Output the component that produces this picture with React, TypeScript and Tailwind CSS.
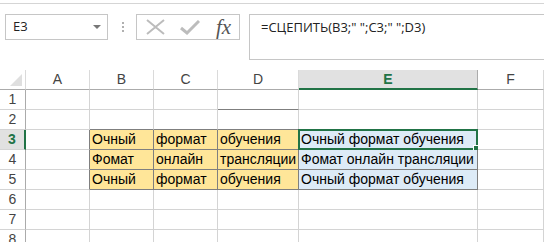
import React from "react";

const COLS = [
  { key: "", w: "w-[26px]" },
  { key: "A", w: "w-[64px]" },
  { key: "B", w: "w-[64px]" },
  { key: "C", w: "w-[64px]" },
  { key: "D", w: "w-[81px]" },
  { key: "E", w: "w-[179px]" },
  { key: "F", w: "w-[66px]" },
];

const DATA: Record<number, string[]> = {
  3: ["Очный", "формат", "обучения", "Очный формат обучения"],
  4: ["Фомат", "онлайн", "трансляции", "Фомат онлайн трансляции"],
  5: ["Очный", "формат", "обучения", "Очный формат обучения"],
};

function Cell({ r, c }: { r: number; c: number }) {
  const w = COLS[c].w;
  if (c === 0) {
    const sel = r === 3;
    return (
      <div
        className={`${w} h-[20px] shrink-0 flex items-center justify-center border-b border-r text-[14px] ${
          sel
            ? "bg-[#e1e1e1] border-r-2 border-r-[#217346] border-b-[#d4d4d4] text-[#217346] font-bold"
            : "border-b-[#d4d4d4] border-r-[#ababab] text-[#444]"
        }`}
      >
        {r}
      </div>
    );
  }
  const inData = r >= 3 && r <= 5;
  const yellow = inData && c >= 2 && c <= 4;
  const blue = inData && c === 5;
  const darkBottom = (r >= 2 && r <= 5 && c >= 2 && c <= 5) || (r === 1 && c === 4);
  const darkRight = inData && c >= 1 && c <= 5;
  const bg = yellow ? "bg-[#ffe699]" : blue ? "bg-[#ddebf7]" : "bg-white";
  const text = inData && c >= 2 ? DATA[r][c - 2] : "";
  return (
    <div
      className={`${w} h-[20px] shrink-0 relative border-b border-r ${bg} ${
        darkBottom ? "border-b-[#7f7f7f]" : "border-b-[#d4d4d4]"
      } ${darkRight ? "border-r-[#7f7f7f]" : "border-r-[#d4d4d4]"} flex items-center pl-[2px] text-[14px] text-black whitespace-nowrap overflow-visible`}
    >
      {text}
      {r === 3 && c === 5 && (
        <>
          <div className="absolute left-[-1px] top-[-1px] right-[-1px] bottom-[-1px] border-2 border-[#217346]" />
          <div className="absolute right-[-3px] bottom-[-3px] w-[5px] h-[5px] bg-[#217346] border border-white box-content" />
        </>
      )}
    </div>
  );
}

export default function App() {
  return (
    <div
      className="w-[544px] h-[242px] bg-white overflow-hidden relative"
      style={{ fontFamily: '"Liberation Sans", Arial, sans-serif' }}
    >
      {/* ribbon edge */}
      <div className="h-[3px] border-b border-[#d5d5d5] box-content" />
      {/* formula bar */}
      <div className="flex items-start pt-[10px] h-[56px]">
        <div
          className="ml-[5px] w-[103px] h-[26px] border border-[#c6c6c6] flex items-center pl-[7px] pr-[6px] text-[13px] text-[#222] justify-between"
          style={{ fontFamily: '"Open Sans", "Noto Sans", sans-serif' }}
        >
          <span>E3</span>
          <svg width="8" height="5" viewBox="0 0 8 5">
            <path d="M0 0 L8 0 L4 4 Z" fill="#777" />
          </svg>
        </div>
        <div className="ml-[13px] w-[4px] h-[26px] flex flex-col items-center justify-center gap-[2px]">
          <div className="w-[2px] h-[2px] bg-[#b0b0b0]" />
          <div className="w-[2px] h-[2px] bg-[#b0b0b0]" />
          <div className="w-[2px] h-[2px] bg-[#b0b0b0]" />
        </div>
        <div className="ml-[11px] w-[104px] h-[26px] border border-[#c6c6c6] flex items-center">
          <svg className="ml-[9px]" width="19" height="16" viewBox="0 0 19 16">
            <path d="M1 1 L18 15 M18 1 L1 15" stroke="#bcbcbc" strokeWidth="2" fill="none" />
          </svg>
          <svg className="ml-[15px]" width="20" height="15" viewBox="0 0 20 15">
            <path d="M1 8 L7 13 L19 1" stroke="#bcbcbc" strokeWidth="3" fill="none" />
          </svg>
          <span
            className="ml-[16px] text-[21px] italic text-[#555] leading-none"
            style={{ fontFamily: '"Liberation Serif", "DejaVu Serif", serif' }}
          >
            fx
          </span>
        </div>
        <div
          className="ml-[9px] flex-1 h-[46px] border border-r-0 border-[#c6c6c6] pl-[11px] pt-[3px] text-[13px] text-[#222]"
          style={{ fontFamily: '"Open Sans", "Noto Sans", sans-serif' }}
        >
          =СЦЕПИТЬ(B3;" ";C3;" ";D3)
        </div>
      </div>
      {/* spacer */}
      <div className="h-[10px]" />
      {/* header row */}
      <div className="flex">
        {COLS.map((col, i) => {
          const sel = col.key === "E";
          return (
            <div
              key={i}
              className={`${col.w} h-[20px] shrink-0 flex items-center justify-center text-[14px] border-r ${
                sel
                  ? "bg-[#e1e1e1] border-b-2 border-b-[#217346] text-[#217346] font-bold border-r-[#ababab]"
                  : "border-b border-b-[#ababab] text-[#444] border-r-[#dadada]"
              } ${i === 0 ? "relative border-r-[#ababab]" : ""}`}
            >
              {i === 0 ? (
                <svg className="absolute left-[10px] top-[4px]" width="12" height="12" viewBox="0 0 12 12">
                  <path d="M12 0 L12 12 L0 12 Z" fill="#dfdfdf" />
                </svg>
              ) : (
                col.key
              )}
            </div>
          );
        })}
      </div>
      {[1, 2, 3, 4, 5, 6, 7, 8].map((r) => (
        <div key={r} className="flex">
          {COLS.map((_, c) => (
            <Cell key={c} r={r} c={c} />
          ))}
        </div>
      ))}
    </div>
  );
}
